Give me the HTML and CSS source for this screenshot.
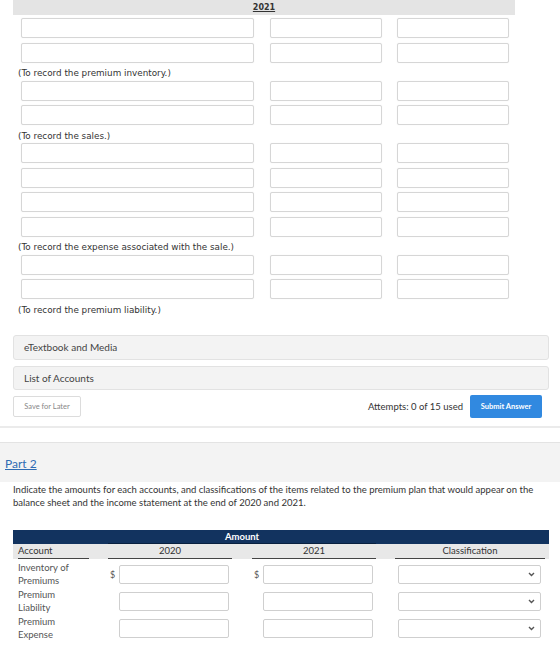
FILE: index.html
```html
<!DOCTYPE html>
<html lang="en">
<head>
    <meta charset="UTF-8">
    <meta name="viewport" content="width=device-width, initial-scale=1.0">
    <title>Premium Plan - Journal Entries</title>
    <link rel="stylesheet" href="styles.css">
</head>
<body>
    <div class="journal">
        <div class="journal-head"><span>2021</span></div>

        <div class="jrow"><input class="j-acct"><input class="j-amt"><input class="j-amt"></div>
        <div class="jrow"><input class="j-acct"><input class="j-amt"><input class="j-amt"></div>
        <div class="jnote">(To record the premium inventory.)</div>

        <div class="jrow"><input class="j-acct"><input class="j-amt"><input class="j-amt"></div>
        <div class="jrow"><input class="j-acct"><input class="j-amt"><input class="j-amt"></div>
        <div class="jnote">(To record the sales.)</div>

        <div class="jrow"><input class="j-acct"><input class="j-amt"><input class="j-amt"></div>
        <div class="jrow"><input class="j-acct"><input class="j-amt"><input class="j-amt"></div>
        <div class="jrow"><input class="j-acct"><input class="j-amt"><input class="j-amt"></div>
        <div class="jrow"><input class="j-acct"><input class="j-amt"><input class="j-amt"></div>
        <div class="jnote">(To record the expense associated with the sale.)</div>

        <div class="jrow"><input class="j-acct"><input class="j-amt"><input class="j-amt"></div>
        <div class="jrow"><input class="j-acct"><input class="j-amt"><input class="j-amt"></div>
        <div class="jnote">(To record the premium liability.)</div>
    </div>

    <div class="resources">
        <div class="panel">eTextbook and Media</div>
        <div class="panel">List of Accounts</div>
    </div>

    <div class="actions">
        <button class="btn-save">Save for Later</button>
        <span class="attempts">Attempts: 0 of 15 used</span>
        <button class="btn-submit">Submit Answer</button>
    </div>

    <div class="divider"></div>

    <div class="part-band">
        <a href="#" class="part-link">Part 2</a>
    </div>

    <p class="question">Indicate the amounts for each accounts, and classifications of the items related to the premium plan that would appear on the balance sheet and the income statement at the end of 2020 and 2021.</p>

    <div class="amounts">
        <div class="top-head">
            <div></div>
            <div class="amount-title"><span>Amount</span></div>
            <div></div>
        </div>
        <div class="sub-head">
            <div class="col-acct"><span>Account</span></div>
            <div class="col-amt"><span>2020</span></div>
            <div class="col-amt"><span>2021</span></div>
            <div class="col-class"><span>Classification</span></div>
        </div>

        <div class="arow">
            <div class="acct-name">Inventory of<br>Premiums</div>
            <div class="cell-amt"><span class="dollar">$</span><input class="amt-input"></div>
            <div class="cell-amt"><span class="dollar">$</span><input class="amt-input"></div>
            <div class="cell-class"><div class="select"><svg width="7" height="5" viewBox="0 0 7 5"><path d="M1 1l2.5 2.5L6 1" fill="none" stroke="#555" stroke-width="1.4"/></svg></div></div>
        </div>
        <div class="arow">
            <div class="acct-name">Premium<br>Liability</div>
            <div class="cell-amt"><span class="dollar"></span><input class="amt-input"></div>
            <div class="cell-amt"><span class="dollar"></span><input class="amt-input"></div>
            <div class="cell-class"><div class="select"><svg width="7" height="5" viewBox="0 0 7 5"><path d="M1 1l2.5 2.5L6 1" fill="none" stroke="#555" stroke-width="1.4"/></svg></div></div>
        </div>
        <div class="arow">
            <div class="acct-name">Premium<br>Expense</div>
            <div class="cell-amt"><span class="dollar"></span><input class="amt-input"></div>
            <div class="cell-amt"><span class="dollar"></span><input class="amt-input"></div>
            <div class="cell-class"><div class="select"><svg width="7" height="5" viewBox="0 0 7 5"><path d="M1 1l2.5 2.5L6 1" fill="none" stroke="#555" stroke-width="1.4"/></svg></div></div>
        </div>
    </div>
</body>
</html>
```

FILE: styles.css
```css
body {
    margin: 0;
    background: white;
    font-family: Lato, "Open Sans", sans-serif;
    color: #333;
}

/* journal entry grid */
.journal {
    padding-left: 13px;
    font-family: "DejaVu Sans", Verdana, sans-serif;
}

.journal-head {
    width: 502px;
    height: 15px;
    background: #e4e4e4;
    text-align: center;
    font-size: 8px;
    font-weight: bold;
    line-height: 15px;
    margin-bottom: 3px;
}

.journal-head span {
    text-decoration: underline;
    color: #333;
}

.jrow {
    display: flex;
    margin-left: 8px;
    margin-bottom: 4.5px;
    height: 20px;
}

.jrow input {
    box-sizing: border-box;
    height: 20px;
    border: 1px solid #d6d6d6;
    border-radius: 2px;
    box-shadow: 0 0 1px #e6e6e6;
    background: white;
    padding: 0;
    margin: 0;
}

.j-acct {
    width: 233px;
    margin-right: 16px !important;
}

.j-amt {
    width: 112px;
    margin-right: 15px !important;
}

.jnote {
    font-size: 8.8px;
    line-height: 13.5px;
    height: 13.5px;
    margin-left: 5px;
    color: #333;
}

/* resource panels */
.resources {
    margin: 17.5px 0 0 13px;
    width: 536px;
}

.panel {
    box-sizing: border-box;
    height: 25px;
    display: flex;
    align-items: center;
    padding-left: 10px;
    background: #f3f3f3;
    border: 1px solid #e2e2e2;
    border-radius: 3px;
    font-size: 10px;
    color: #444;
    margin-bottom: 6px;
}

.panel + .panel {
    height: 24px;
}

.actions {
    display: flex;
    align-items: center;
    width: 529px;
    margin-left: 13px;
    height: 23px;
    margin-top: -1px;
}

.btn-save {
    box-sizing: border-box;
    width: 68px;
    height: 21px;
    background: white;
    border: 1px solid #dcdcdc;
    border-radius: 2px;
    font-family: Lato, sans-serif;
    font-size: 7.5px;
    color: #888;
    padding: 0;
    margin-right: auto;
}

.attempts {
    font-size: 9.5px;
    color: #333;
    margin-right: 7px;
}

.btn-submit {
    width: 72px;
    height: 23px;
    background: #3189e0;
    border: none;
    border-radius: 2px;
    color: white;
    font-family: Lato, sans-serif;
    font-weight: bold;
    font-size: 7.5px;
    padding: 0;
}

.divider {
    height: 2px;
    background: #ebebeb;
    margin-top: 8px;
}

.part-band {
    margin-top: 14px;
    height: 39px;
    background: #f3f3f3;
    border-top: 1px solid #e3e3e3;
    display: flex;
    align-items: center;
    padding-left: 5px;
}

.part-link {
    font-size: 12px;
    color: #2f6cb3;
    text-decoration: underline;
    margin-top: 2px;
}

.question {
    margin: 1.5px 0 0 13px;
    width: 536px;
    font-size: 9.5px;
    line-height: 13px;
    color: #333;
}

/* amounts and classification table */
.amounts {
    margin: 20.5px 0 0 13px;
    width: 536px;
}

.top-head,
.sub-head,
.arow {
    display: grid;
    grid-template-columns: 86px 144px 144px 162px;
}

.top-head {
    grid-template-columns: 86px 288px 162px;
    height: 14px;
    background: #12335f;
}

.amount-title {
    margin: 0 11px 0 9px;
    border-bottom: 1px solid #08203f;
    text-align: center;
    color: white;
    font-weight: bold;
    font-size: 9.5px;
    line-height: 13px;
}

.sub-head {
    height: 15px;
    background: #e8e8e8;
    font-size: 9.5px;
    margin-bottom: 2px;
}

.sub-head > div {
    border-bottom: 1px solid #444;
    line-height: 14px;
    height: 14px;
}

.col-acct {
    margin: 0 10px 0 5px;
}

.col-amt {
    margin: 0 11px 0 9px;
    text-align: center;
}

.col-class {
    margin: 0 4px 0 8px;
    text-align: center;
}

.arow {
    height: 27px;
    align-items: center;
}

.acct-name {
    padding-left: 5px;
    font-size: 9.5px;
    line-height: 13.5px;
    color: #555;
}

.cell-amt {
    display: flex;
    align-items: center;
}

.dollar {
    width: 20px;
    padding-left: 11px;
    box-sizing: border-box;
    font-size: 9px;
    color: #555;
}

.amt-input {
    box-sizing: border-box;
    width: 110px;
    height: 19px;
    border: 1px solid #cfcfcf;
    border-radius: 2px;
    padding: 0;
    margin: 0;
}

.cell-class {
    padding-left: 11px;
}

.select {
    box-sizing: border-box;
    width: 143px;
    height: 19px;
    border: 1px solid #cfcfcf;
    border-radius: 2px;
    display: flex;
    align-items: center;
    justify-content: flex-end;
    padding-right: 5px;
}
```
